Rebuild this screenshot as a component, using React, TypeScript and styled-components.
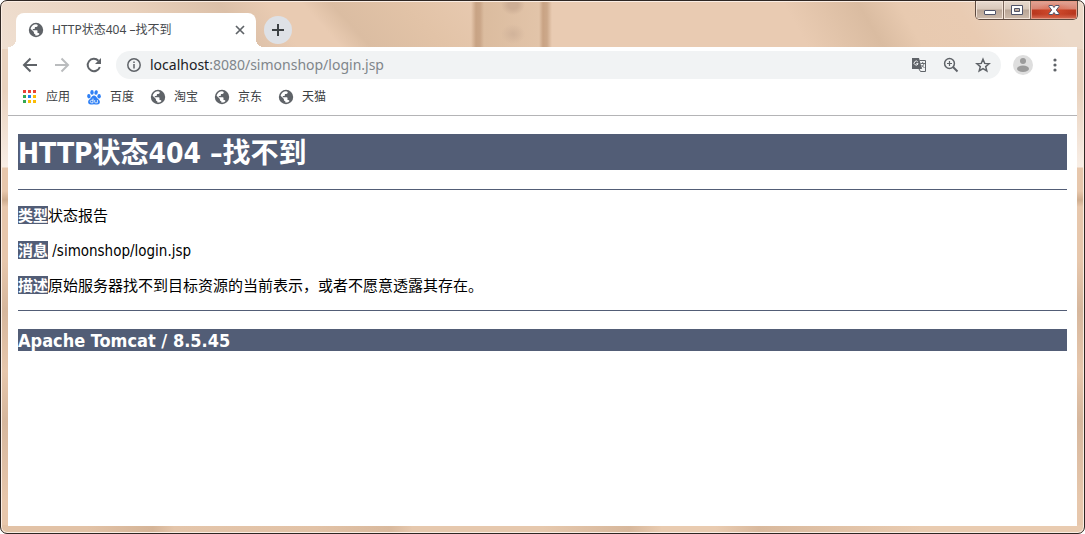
import React from "react";
import styled, { createGlobalStyle } from "styled-components";

const Global = createGlobalStyle`
  * { box-sizing: border-box; }
  html, body, #root { height: 100%; }
  body { margin: 0; background: #fff; }
  button { border: 0; padding: 0; background: none; font: inherit; color: inherit; }
`;

const ui = `"Noto Sans", "Noto Sans CJK SC", sans-serif`;
const pageFont = `"DejaVu Sans Condensed", "Noto Sans CJK SC", sans-serif`;
const ink = "#525d76";

const Frame = styled.div`
  display: flex;
  flex-direction: column;
  height: 100%;
  border: 1px solid #2f2723;
  border-radius: 7px;
  box-shadow: inset 0 0 0 1px #fbeee4;
  padding: 1px 7px 7px;
  background:
    radial-gradient(ellipse 12px 10px at 512px 4px, #cdae95 40%, transparent),
    radial-gradient(ellipse 12px 10px at 512px 33px, #d2b49b 10%, transparent),
    linear-gradient(90deg, transparent 470px, #c8a384 475px, #caa688 479px, #dbbc9f 483px, #e2c4a9 538px, #c9a384 542px, #cca88a 546px, transparent 551px) 0 0 / 100% 48px no-repeat,
    linear-gradient(48deg, transparent 254px, #dbbda2 276px, #e2c3a7 330px, transparent 400px) 0 0 / 100% 48px no-repeat,
    linear-gradient(55deg, #efdfd1 0, #e9d1bc 130px, #dcc0a8 205px, #e9cbb2 245px, transparent 290px) 0 0 / 360px 48px no-repeat,
    linear-gradient(60deg, #e9cbb2 700px, #dabca1 765px, #e8cab0 800px, #e9cbb2 850px, #ecd9c8 930px) 0 0 / 100% 48px no-repeat,
    linear-gradient(90deg, #e2c2a6 8%, #d5b497 14%, #e4c5aa 16%, #e2c2a6 29%, #d9b99d 36%, #e6c8ad 38%, #e6c8ad 50%, #d7b79b 58%, #e9cbb0 61%, #e9cbb0 66%, #d9b99d 70%, #e9cbb0 85%) 0 100% / 100% 8px no-repeat,
    linear-gradient(180deg, #e9d2be 90px, #f8eee6 166px, #e7c7ac 167px, #e7c7ac 190px, #cfad8f 199px, #e7c7ac 206px, #e7c7ac 260px, #d6b79d 310px, #e7c7ac 370px, #d6b79d 420px, #e7c7ac 500px);
`;

const TitleBar = styled.header`
  display: flex;
  align-items: flex-end;
  height: 45px;
  flex: none;
`;

const Tab = styled.div`
  position: relative;
  display: flex;
  align-items: center;
  width: 240px;
  height: 34px;
  margin-left: 8px;
  padding: 0 8px 0 12px;
  border-radius: 8px 8px 0 0;
  background: #fff;
  color: #45494d;
  font: 12px/18px ${ui};
  &::before, &::after {
    content: "";
    position: absolute;
    bottom: 0;
    width: 8px;
    height: 8px;
  }
  &::before { left: -8px; background: radial-gradient(circle at 0 0, transparent 8px, #fff 8px); }
  &::after { right: -8px; background: radial-gradient(circle at 100% 0, transparent 8px, #fff 8px); }
`;

const TabTitle = styled.span`
  flex: 1;
  margin-left: 8px;
  white-space: nowrap;
`;

const IconButton = styled.button<{ $w?: number }>`
  display: grid;
  place-items: center;
  width: ${(p) => p.$w ?? 16}px;
  height: 28px;
  flex: none;
  svg { display: block; }
`;

const NewTab = styled(IconButton)`
  align-self: flex-end;
  margin: 0 0 3px 8px;
  border-radius: 50%;
  background: #dee1e6;
`;

const WindowControls = styled.div`
  display: flex;
  align-self: flex-start;
  height: 19px;
  margin: -1px -1px 0 auto;
  border: 1px solid #5d4a40;
  border-top: 0;
  border-radius: 0 0 5px 5px;
  overflow: hidden;
`;

const WindowButton = styled.button<{ $close?: boolean }>`
  display: grid;
  place-items: center;
  width: ${(p) => (p.$close ? 47 : 27)}px;
  box-shadow: inset 0 0 0 1px ${(p) => (p.$close ? "#e59a85" : "#f3e4d9")};
  background: ${(p) =>
    p.$close
      ? "radial-gradient(ellipse at 50% 60%, #e2583699, transparent 60%), linear-gradient(#e2a596 0, #d98472 8px, #bd3a20 9px, #b8381f 13px, #d8705a)"
      : "linear-gradient(#e8dbd0 0, #d9c8ba 8px, #b9a596 9px, #cdbaab)"};
  & + & { border-left: 1px solid #7c685c; }
`;

const Toolbar = styled.nav`
  display: flex;
  align-items: center;
  height: 36px;
  flex: none;
  padding: 0 14px;
  background: #fff;
  color: #5f6368;
`;

const NavButtons = styled.div`
  display: flex;
  gap: 16px;
  margin-right: 14px;
`;

const Omnibox = styled.form`
  display: flex;
  align-items: center;
  flex: 1;
  height: 28px;
  margin-right: 12px;
  padding: 0 10px;
  border-radius: 14px;
  background: #f1f3f4;
`;

const Address = styled.a`
  flex: 1;
  margin-left: 8px;
  color: #80868b;
  font: 14px/20px ${ui};
  text-decoration: none;
  b { color: #202124; font-weight: 400; }
`;

const Actions = styled.div`
  display: flex;
  gap: 16px;
`;

const Avatar = styled(IconButton)`
  margin-right: 14px;
`;

const Bookmarks = styled.nav`
  display: flex;
  align-items: center;
  gap: 16px;
  height: 33px;
  flex: none;
  padding: 0 14px 4px;
  border-bottom: 1px solid #b4b4b6;
  background: #fff;
`;

const Bookmark = styled.a`
  display: flex;
  align-items: center;
  gap: 8px;
  color: #3c4043;
  font: 12px/18px ${ui};
  text-decoration: none;
`;

const Page = styled.main`
  flex: 1;
  padding: 18px 10px;
  background: #fff;
  color: #000;
  font: 15px/16px ${pageFont};
`;

const Title = styled.h1`
  margin: 0;
  padding-top: 4px;
  background: ${ink};
  color: #fff;
  font: 700 28px/32px ${pageFont};
`;

const Rule = styled.hr<{ $top?: number; $bottom?: number }>`
  height: 1px;
  margin: ${(p) => `${p.$top ?? 16}px 0 ${p.$bottom ?? 16}px`};
  border: 0;
  background: ${ink};
`;

const Line = styled.p`
  display: flex;
  align-items: flex-end;
  margin: 0 0 17px;
  white-space: pre;
  &:last-of-type { margin-bottom: 16px; }
  b { padding-top: 2px; background: ${ink}; color: #fff; }
`;

const Server = styled.h3`
  margin: 0;
  padding-top: 2px;
  background: ${ink};
  color: #fff;
  font: 700 18px/20px ${pageFont};
`;

const Globe = () => (
  <svg width="16" height="16" viewBox="0 0 16 16" aria-hidden="true">
    <circle cx="8" cy="8" r="7.2" fill="#5f6368" />
    <path
      fill="#fff"
      d="M9.700 2.900v.6c0 .8-.6 1.400-1.400 1.400H6.900v1.300c0 .4-.3.700-.7.700H4.800v1.400h4c.4 0 .7.300.7.700v2h.7c.6 0 1.100.4 1.300.9-1 1.100-2.300 1.700-4.200 1.500v-1.200c-.8 0-1.400-.6-1.400-1.400v-.7L2.600 6.800C3.200 4.200 5.400 2.300 8 2.300c.6 0 1.200.2 1.700.6z"
    />
  </svg>
);

const Svg = ({ children, size = 16 }: { children: React.ReactNode; size?: number }) => (
  <svg width={size} height={size} viewBox="0 0 16 16" fill="none" stroke="#5f6368" strokeWidth="2" aria-hidden="true">
    {children}
  </svg>
);

const Apps = () => (
  <svg width="16" height="16" viewBox="0 0 16 16" shapeRendering="crispEdges" aria-hidden="true">
    {["#ea4335", "#ea4335", "#ea4335", "#34a853", "#1a82f0", "#fbbc05", "#34a853", "#fbbc05", "#fbbc05"].map((c, i) => (
      <rect key={i} x={1 + (i % 3) * 5} y={1 + Math.floor(i / 3) * 5} width="3" height="3" fill={c} />
    ))}
  </svg>
);

const Paw = () => (
  <svg width="16" height="16" viewBox="0 0 16 16" fill="#2f80f5" aria-hidden="true">
    <ellipse cx="2.9" cy="7.2" rx="1.7" ry="2.2" transform="rotate(-10 2.9 7.2)" />
    <ellipse cx="6" cy="3.4" rx="1.7" ry="2.3" />
    <ellipse cx="10.1" cy="3.5" rx="1.7" ry="2.3" transform="rotate(12 10.1 3.5)" />
    <ellipse cx="13.1" cy="7.3" rx="1.7" ry="2.2" />
    <path d="M8 6.600c1.500 0 2.200 1.300 3.100 2.400 1.200 1.200 2.800 2.200 2.800 4 0 1.700-1.200 2.500-2.800 2.500-1.100 0-2-.3-3.100-.3s-2 .3-3.100.3c-1.600 0-2.800-.8-2.800-2.500 0-1.800 1.600-2.800 2.800-4C5.800 7.900 6.500 6.600 8 6.600z" />
    <path d="M7 9.500v4.300H5.600c-.9 0-1.300-.6-1.300-1.300s.5-1.200 1.300-1.200H7M8.700 11v2c0 .6.3.8.8.8h1.900V11" fill="none" stroke="#fff" strokeWidth=".8" />
  </svg>
);

const bookmarks = [
  { label: "应用", icon: <Apps /> },
  { label: "百度", icon: <Paw /> },
  { label: "淘宝", icon: <Globe /> },
  { label: "京东", icon: <Globe /> },
  { label: "天猫", icon: <Globe /> },
];

export default function App() {
  return (
    <>
      <Global />
      <Frame>
        <TitleBar>
          <Tab>
            <Globe />
            <TabTitle>HTTP状态404 –找不到</TabTitle>
            <IconButton aria-label="Close tab">
              <Svg><path d="M4 4l8 8M12 4l-8 8" strokeWidth="1.7" /></Svg>
            </IconButton>
          </Tab>
          <NewTab $w={28} aria-label="New tab">
            <Svg><path d="M8 2v12M2 8h12" stroke="#3c4043" /></Svg>
          </NewTab>
          <WindowControls>
            <WindowButton aria-label="Minimize">
              <svg width="14" height="14" viewBox="0 0 14 14"><rect x="1.500" y="7.500" width="11" height="4" rx=".5" fill="#fff" stroke="#515469" /></svg>
            </WindowButton>
            <WindowButton aria-label="Maximize">
              <svg width="14" height="14" viewBox="0 0 14 14"><path d="M1.500 2.500h11v9h-11zM4.500 5.500v3h5v-3z" fill="#fff" fillRule="evenodd" stroke="#515469" /></svg>
            </WindowButton>
            <WindowButton $close aria-label="Close">
              <svg width="14" height="14" viewBox="0 0 14 14"><path d="M2 2.500h3.500L7 4.500l1.500-2H12v1L9.300 7l2.700 3.500v1H8.500L7 9.500l-1.500 2H2v-1L4.700 7 2 3.500z" fill="#fff" stroke="#515469" /></svg>
            </WindowButton>
          </WindowControls>
        </TitleBar>

        <Toolbar>
          <NavButtons>
            <IconButton aria-label="Back"><Svg><path d="M15 8H2.500M8.500 1.500L2 8l6.500 6.500" /></Svg></IconButton>
            <IconButton aria-label="Forward"><Svg><path d="M1 8h12.500M7.500 1.500L14 8l-6.500 6.500" stroke="#babcbe" /></Svg></IconButton>
            <IconButton aria-label="Reload">
              <Svg><path d="M13.800 10A6.200 6.200 0 1 1 12.400 3.700" /><path d="M15 1v6H9z" fill="#5f6368" stroke="none" /></Svg>
            </IconButton>
          </NavButtons>
          <Omnibox>
            <IconButton type="button" aria-label="Site information">
              <Svg><circle cx="8" cy="8" r="6.2" strokeWidth="1.5" /><path d="M8 7v4.500M8 4.400v1.500" strokeWidth="1.5" /></Svg>
            </IconButton>
            <Address href="#"><b>localhost</b>:8080/simonshop/login.jsp</Address>
            <Actions>
              <IconButton type="button" aria-label="Translate">
                <Svg>
                  <path d="M1 1h7l3 11H1z" fill="#5f6368" stroke="none" />
                  <path d="M8.500 3.500h6v11h-5L8 12" strokeWidth="1" />
                  <path d="M6.800 4.900a2 2 0 1 0 .3 1.700H5.300" stroke="#f1f3f4" strokeWidth="1" />
                  <path d="M9.500 6.500h4.500M11.700 5v1.500M13 6.500c-.4 1.700-1.400 3-2.800 4M10.500 8l3 3" strokeWidth=".9" />
                </Svg>
              </IconButton>
              <IconButton type="button" aria-label="Zoom">
                <Svg><circle cx="6.5" cy="6.5" r="4.9" strokeWidth="1.5" /><path d="M10 10l4.500 4.500" strokeWidth="1.9" /><path d="M6.500 4v5M4 6.500h5" strokeWidth="1.2" /></Svg>
              </IconButton>
              <IconButton type="button" aria-label="Bookmark this page">
                <Svg><path d="M8 2.300l1.700 4.100 4.400.3-3.400 2.900 1.100 4.300L8 11.600l-3.800 2.300 1.100-4.300-3.400-2.900 4.400-.3z" strokeWidth="1.5" /></Svg>
              </IconButton>
            </Actions>
          </Omnibox>
          <Avatar $w={20} aria-label="Profile">
            <svg width="20" height="20" viewBox="0 0 20 20"><circle cx="10" cy="10" r="10" fill="#dedede" /><g fill="#9b9b9b"><circle cx="10" cy="6" r="3" /><ellipse cx="10" cy="13.7" rx="6" ry="3.2" /></g></svg>
          </Avatar>
          <IconButton aria-label="Menu">
            <svg width="16" height="16" viewBox="0 0 16 16" fill="#5f6368"><circle cx="8" cy="3" r="1.6" /><circle cx="8" cy="8" r="1.6" /><circle cx="8" cy="13" r="1.6" /></svg>
          </IconButton>
        </Toolbar>

        <Bookmarks>
          {bookmarks.map((b) => (
            <Bookmark key={b.label} href="#">{b.icon}{b.label}</Bookmark>
          ))}
        </Bookmarks>

        <Page>
          <Title>HTTP状态404 –找不到</Title>
          <Rule $top={19} />
          <Line><b>类型</b>状态报告</Line>
          <Line><b>消息</b> /simonshop/login.jsp</Line>
          <Line><b>描述</b>原始服务器找不到目标资源的当前表示，或者不愿意透露其存在。</Line>
          <Rule $bottom={18} />
          <Server>Apache Tomcat / 8.5.45</Server>
        </Page>
      </Frame>
    </>
  );
}
